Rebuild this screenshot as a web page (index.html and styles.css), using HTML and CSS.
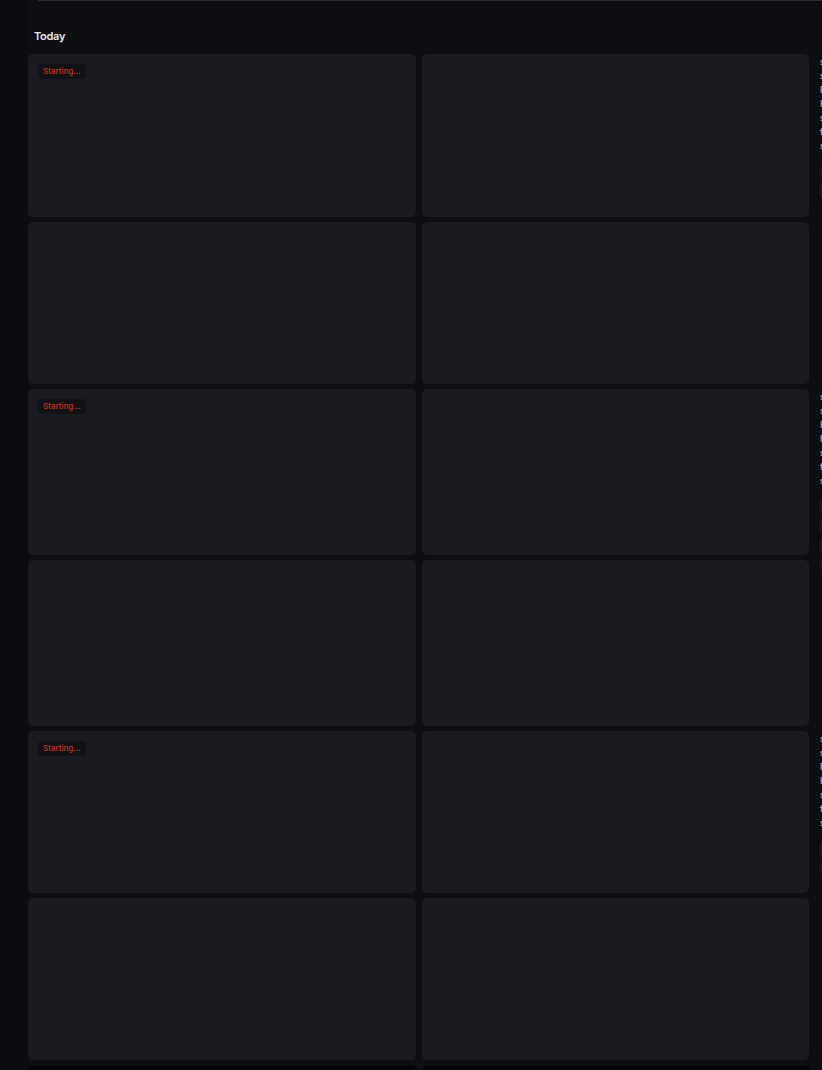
FILE: index.html
```html
<!DOCTYPE html>
<html>
<head>
<meta charset="utf-8">
<link rel="stylesheet" href="styles.css">
</head>
<body>
<div class="page">
  <div class="rail"></div>
  <main class="main">
    <div class="topline"></div>
    <h2 class="day">Today</h2>
    <div class="grid">
      <div class="card"><span class="badge">Starting...</span></div>
      <div class="card"></div>
      <div class="side">
        <p>s</p><p>s</p><p>F</p><p>H</p><p>s</p><p>f</p><p>s</p>
        <div class="chip"></div><div class="chip"></div>
      </div>

      <div class="card"></div>
      <div class="card"></div>
      <div class="side"></div>

      <div class="card"><span class="badge">Starting...</span></div>
      <div class="card"></div>
      <div class="side">
        <p>s</p><p>s</p><p>F</p><p>H</p><p>s</p><p>f</p><p>s</p>
        <div class="chip"></div><div class="chip"></div><div class="chip"></div><div class="chip"></div>
      </div>

      <div class="card"></div>
      <div class="card"></div>
      <div class="side"></div>

      <div class="card"><span class="badge">Starting...</span></div>
      <div class="card"></div>
      <div class="side">
        <p>s</p><p>s</p><p>F</p><p>H</p><p>s</p><p>f</p><p>s</p>
        <div class="chip"></div><div class="chip"></div>
      </div>

      <div class="card"></div>
      <div class="card"></div>
      <div class="side"></div>

      <div class="card dark"></div>
      <div class="card dark"></div>
      <div class="side"></div>
    </div>
  </main>
</div>
</body>
</html>
```
FILE: styles.css
```css
html, body {
  margin: 0;
  padding: 0;
  background: #0d0e12;
  overflow: hidden;
  height: 1070px;
}
body {
  font-family: Inter, "DejaVu Sans", sans-serif;
}
.page {
  display: flex;
  width: 822px;
  height: 1070px;
  overflow: hidden;
}
.rail {
  flex: 0 0 28px;
  background: #0b0c0f;
}
.main {
  flex: 1;
  display: flex;
  flex-direction: column;
  min-width: 0;
}
.topline {
  flex-shrink: 0;
  height: 1px;
  margin-left: 10px;
  background: #2c2d33;
}
.day {
  flex-shrink: 0;
  margin: 0;
  height: 53px;
  box-sizing: border-box;
  padding: 29px 0 0 6px;
  font-size: 11px;
  line-height: 13px;
  font-weight: 600;
  color: #e6e6ea;
  letter-spacing: -0.3px;
}
.grid {
  flex-shrink: 0;
  display: grid;
  grid-template-columns: 388px 387px 200px;
  grid-template-rows: 163px 162px 166px 166px 162px 162px 162px;
  column-gap: 6px;
  row-gap: 5px;
}
.card {
  background: #1a1b20;
  border-radius: 5px;
  padding: 10px;
  box-sizing: border-box;
  display: flex;
  flex-direction: column;
  align-items: flex-start;
}
.card.dark {
  background: #050507;
}
.badge {
  display: block;
  background: #111216;
  color: #c9321c;
  font-size: 8px;
  font-weight: 500;
  line-height: 15px;
  padding: 0 5px;
  border-radius: 4px;
}
.side {
  padding-left: 5px;
  padding-top: 1px;
}
.side p {
  margin: 0;
  font-size: 9px;
  line-height: 14px;
  color: #c8c9cd;
}
.chip {
  width: 40px;
  height: 14px;
  margin-top: 5px;
  border-radius: 4px;
  background: #1b1c21;
}
.side p + .chip {
  margin-top: 12px;
}
```
